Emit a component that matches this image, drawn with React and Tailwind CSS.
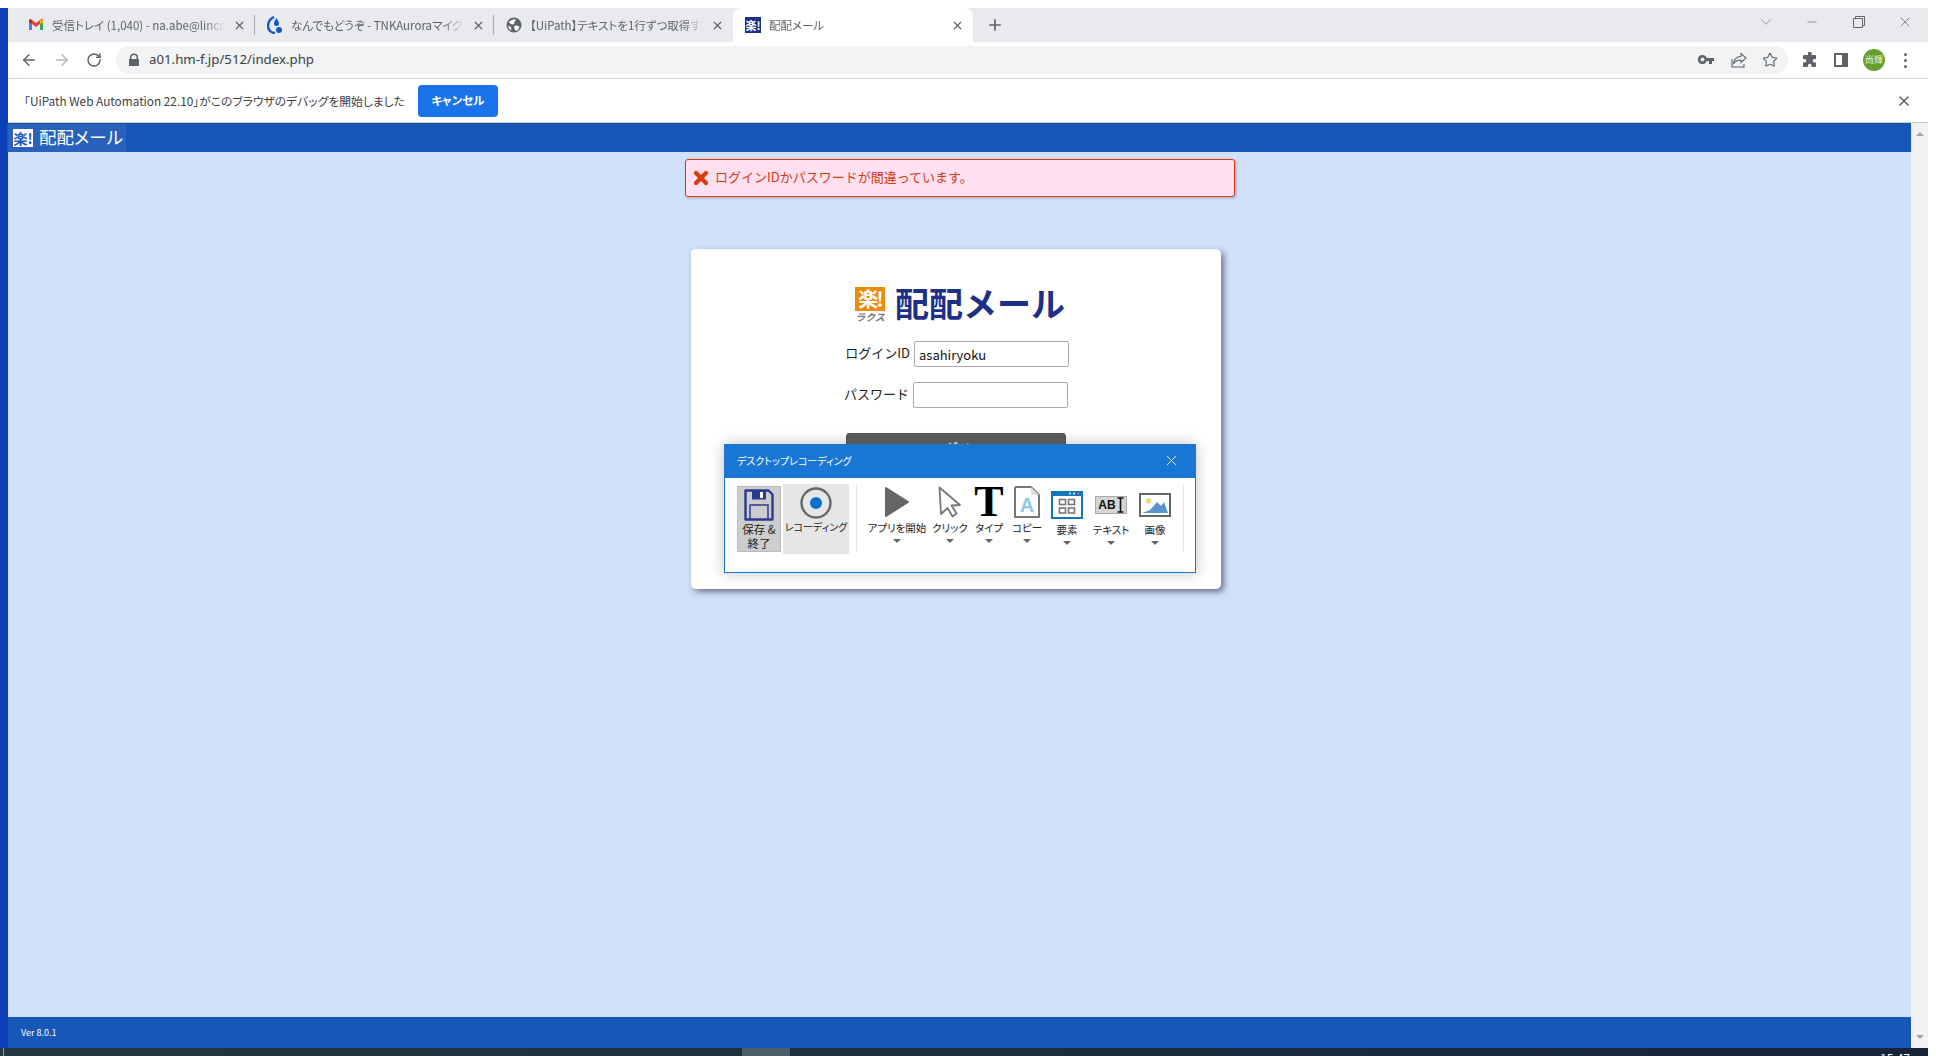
import { ArrowLeft, ArrowRight, RotateCw, X, Plus, ChevronDown, Minus, Star } from "lucide-react";

function GmailIcon() {
  return (
    <svg width="16" height="16" viewBox="0 0 16 16" className="shrink-0">
      <path d="M1 4v9h3V7z" fill="#4285f4" />
      <path d="M12 7v6h3V4z" fill="#34a853" />
      <path d="M1 4.500 4 7l4 3 4-3 3-2.500V3.500C15 2.300 13.700 1.700 12.800 2.400L8 6 3.200 2.400C2.300 1.700 1 2.300 1 3.500z" fill="#ea4335" />
      <path d="M12 2.900 15 3.500V5l-3 2z" fill="#fbbc04" />
      <path d="M1 3.500V5l3 2V2.900z" fill="#c5221f" />
    </svg>
  );
}

function AuroraIcon() {
  return (
    <svg width="16" height="18" viewBox="0 0 16 18" className="shrink-0">
      <path d="M7 1C3 3 1 6.500 1 10c0 4 3 7 7 7" fill="none" stroke="#1a56c4" strokeWidth="2.400" />
      <path d="M9.500 2C8 4.500 7 6 7 7.500a2.500 2.500 0 0 0 5 0C12 6 11 4.500 9.500 2z" fill="#1a56c4" />
      <circle cx="12" cy="14" r="3" fill="#1a56c4" />
    </svg>
  );
}

function GlobeIcon() {
  return (
    <svg width="16" height="16" viewBox="0 0 16 16" className="shrink-0">
      <circle cx="8" cy="8" r="7.500" fill="#5f6368" />
      <path d="M3 4.500 6 3l2.500-1L10 3.500 8 5l.500 2-2.500.500L3.500 6zM8 9l3-.500 2.500 1-1 3-2.500 1.500L8.500 12zM2 8.500 5 10l.500 3.500L3 11.500z" fill="#fff" />
    </svg>
  );
}

function RakuFavicon() {
  return (
    <span className="w-4 h-4 shrink-0 bg-[#1d2f86] text-white text-[11px] leading-4 font-bold text-center overflow-hidden">
      楽!
    </span>
  );
}

function Tab({ icon, title, active }) {
  return (
    <div
      className={
        active
          ? "w-[240px] h-[34px] bg-white rounded-t-lg flex items-center pl-3 pr-[9px] gap-2"
          : "w-[238px] h-[34px] flex items-center pl-3 pr-[8px] gap-2"
      }
    >
      {icon}
      <span className="flex-1 min-w-0 pt-px whitespace-nowrap overflow-hidden text-[11.500px] text-[#5f6368] [mask-image:linear-gradient(to_right,black_88%,transparent)]">
        {title}
      </span>
      <X size={13} strokeWidth={2.200} className="text-[#5f6368] shrink-0" />
    </div>
  );
}

function ToolItem({ width, label, low, children }) {
  return (
    <div className="flex flex-col items-center" style={{ width }}>
      <div className="h-[36px] w-full flex items-center justify-center">{children}</div>
      <div className={low ? "mt-[2px] text-[10.500px] leading-[16px] text-[#222] whitespace-nowrap" : "text-[10.500px] leading-[16px] text-[#222] whitespace-nowrap"}>
        {label}
      </div>
      <div className="mt-[3px] w-0 h-0 border-x-[4px] border-x-transparent border-t-[4px] border-t-[#666]" />
    </div>
  );
}

export default function App() {
  return (
    <div className="w-[1936px] h-[1056px] bg-white pt-2 flex flex-col overflow-hidden font-['Noto_Sans_CJK_JP','Noto_Sans',sans-serif] [font-feature-settings:'palt']">
      <div className="flex-1 min-h-0 flex">
        {/* left edge of the desktop */}
        <div className="w-2 bg-[#0a3fb8]" />

        {/* browser window */}
        <div className="w-[1920px] flex flex-col">
          {/* tab strip */}
          <div className="h-[34px] bg-[#e8eaed] flex pl-2 items-stretch">
            <Tab icon={<GmailIcon />} title="受信トレイ (1,040) - na.abe@lincrea.co.jp" />
            <div className="w-px h-[20px] self-center bg-[#a9acb0]" />
            <Tab icon={<AuroraIcon />} title="なんでもどうぞ - TNKAuroraマイグレーション" />
            <div className="w-px h-[20px] self-center bg-[#a9acb0]" />
            <Tab icon={<GlobeIcon />} title="【UiPath】テキストを1行ずつ取得する方法" />
            <div className="w-px" />
            <Tab active icon={<RakuFavicon />} title="配配メール" />
            <div className="ml-[13px] h-[34px] flex items-center">
              <Plus size={18} strokeWidth={2.200} className="text-[#5f6368]" />
            </div>
            <div className="flex-1 flex items-center justify-end h-[28px]">
              <ChevronDown size={18} strokeWidth={1} className="text-[#777]" />
              <Minus size={14} strokeWidth={1} className="text-[#555] ml-[30px]" />
              <svg width="12" height="12" viewBox="0 0 12 12" className="ml-[34px]" fill="none" stroke="#666">
                <path d="M.500 2.500h9v9h-9zM2.500 2.500v-2h9v9h-2" />
              </svg>
              <X size={16} strokeWidth={1} className="text-[#555] ml-[32px] mr-[15px]" />
            </div>
          </div>

          {/* address bar */}
          <div className="h-[37px] bg-white border-b border-[#d6d7d9] flex items-center">
            <ArrowLeft size={18} strokeWidth={2} className="text-[#5f6368] ml-3" />
            <ArrowRight size={18} strokeWidth={2} className="text-[#b5b7ba] ml-[15px]" />
            <RotateCw size={16} strokeWidth={2.200} className="text-[#5f6368] ml-[15px]" />
            <div className="ml-[14px] w-[1672px] h-[28px] rounded-full bg-[#f1f3f4] flex items-center pl-[12px] pr-[10px]">
              <svg width="12" height="14" viewBox="0 0 12 14" fill="#5f6368">
                <path d="M2 6V4.500a4 4 0 0 1 8 0V6h1v7H1V6zm1.500 0h5V4.500a2.500 2.500 0 0 0-5 0z" />
              </svg>
              <span className="ml-[9px] text-[13.250px] font-['Noto_Sans',sans-serif] text-[#3c4043]">a01.hm-f.jp/512/index.php</span>
              <div className="flex-1" />
              <svg width="16" height="10" viewBox="0 0 16 10" fill="#5f6368" className="mr-[17px]">
                <path d="M4.500 0a4.500 4.500 0 0 1 4.200 3H16v3h-2v3h-3V6H8.700A4.500 4.500 0 1 1 4.500 0zm0 2.500a2 2 0 1 0 0 4 2 2 0 0 0 0-4z" />
              </svg>
              <svg width="16" height="16" viewBox="0 0 16 16" fill="none" stroke="#5f6368" strokeWidth="1.100" className="mr-[15px]">
                <path d="M10 1.500 15 6l-5 4.500V8C6 8 4 9.500 2.500 12 3 8 5.500 4.700 10 4.300zM1 7v8h12v-3" />
              </svg>
              <Star size={16} strokeWidth={1.600} className="text-[#5f6368]" />
            </div>
            <svg width="16" height="16" viewBox="0 0 16 16" fill="#5f6368" className="ml-[14px]">
              <path d="M6 1.500a1.800 1.800 0 0 1 3.600 0V3H13a1 1 0 0 1 1 1v3h-1.500a1.800 1.800 0 0 0 0 3.600H14V14a1 1 0 0 1-1 1H9.500v-1.500a1.800 1.800 0 0 0-3.600 0V15H2a1 1 0 0 1-1-1v-3.500h1.500a1.800 1.800 0 0 0 0-3.600H1V4a1 1 0 0 1 1-1h4z" />
            </svg>
            <div className="ml-[16px] w-[14px] h-[14px] border-2 border-[#5f6368] bg-white border-r-[6px]" />
            <div className="ml-[15px] w-[22px] h-[22px] rounded-full bg-[#65a030] text-[#e8f3dc] text-[9px] leading-[22px] text-center">尚輝</div>
            <div className="ml-[19px] flex flex-col gap-[3px]">
              <span className="w-[3px] h-[3px] rounded-full bg-[#5f6368]" />
              <span className="w-[3px] h-[3px] rounded-full bg-[#5f6368]" />
              <span className="w-[3px] h-[3px] rounded-full bg-[#5f6368]" />
            </div>
          </div>

          {/* debugging info bar */}
          <div className="h-[44px] bg-white flex items-center pl-4 pr-[16px] border-b border-[#c9ccd2]">
            <span className="text-[11.800px] text-[#3c4043] whitespace-nowrap pt-px">「UiPath Web Automation 22.10」がこのブラウザのデバッグを開始しました</span>
            <button className="ml-[13px] w-[80px] h-[32px] rounded bg-[#1a73e8] text-white text-[11.500px] font-bold">キャンセル</button>
            <div className="flex-1" />
            <X size={16} strokeWidth={2.400} className="text-[#5f6368]" />
          </div>

          {/* page + scrollbar */}
          <div className="flex-1 min-h-0 flex">
            <div className="relative w-[1903px] flex flex-col">
              <div className="h-[29px] bg-[#1757b8] border-t border-[#1d4c9a] shadow-[0_1px_1px_#9fb0c8] flex">
                <div className="w-[118px] h-full bg-[#2a62bb] flex items-center pl-[5px] gap-[6px]">
                  <span className="shrink-0 w-[20px] h-[18px] bg-white text-[#1757b8] text-[14px] leading-[18px] font-bold text-center overflow-hidden">楽!</span>
                  <span className="text-white text-[17.500px] leading-none whitespace-nowrap mt-[-3px]">配配メール</span>
                </div>
              </div>

              <div className="flex-1 min-h-0 bg-[#d0e1f9] flex flex-col items-center pt-[7px]">
                {/* error message */}
                <div className="w-[550px] h-[38px] shrink-0 rounded-[3px] border border-[#d93a12] bg-[#ffe0f0] shadow-[1px_1px_3px_rgba(0,0,0,0.25)] flex items-center pl-[5px] gap-[4px] ml-[1px]">
                  <X size={20} strokeWidth={5} className="text-[#d93a12] shrink-0" />
                  <span className="text-[13px] text-[#d93a12] mt-[-2px] [font-feature-settings:normal]">ログインIDかパスワードが間違っています。</span>
                </div>

                {/* login card */}
                <div className="relative mt-[52px] mr-[7px] w-[530px] h-[340px] shrink-0 bg-white rounded-[5px] shadow-[3px_3px_6px_rgba(40,50,70,0.6)] flex flex-col items-center pt-[38px]">
                  <div className="flex items-start ml-[8px] [font-feature-settings:normal]">
                    <div className="flex flex-col items-center w-[30px]">
                      <span className="w-[30px] h-[24px] bg-[#ef8a05] text-white text-[20px] leading-[24px] font-bold text-center overflow-hidden tracking-[-2px]">楽!</span>
                      <span className="text-[#777] text-[10px] leading-[12px] font-bold italic whitespace-nowrap">ラクス</span>
                    </div>
                    <span className="ml-[10px] mt-[-2px] text-[#1d2f86] text-[34px] leading-[36px] font-bold whitespace-nowrap">配配メール</span>
                  </div>
                  <div className="mt-[18px] flex items-center gap-[4px] ml-[-3px]">
                    <span className="w-[70px] text-right text-[13px] text-[#222] mt-[-2px] [font-feature-settings:normal]">ログインID</span>
                    <input readOnly value="asahiryoku" className="w-[155px] h-[26px] px-1 border border-[#aaa] rounded-[2px] text-[13px] text-[#111] outline-none" />
                  </div>
                  <div className="mt-[15px] flex items-center gap-[4px] ml-[-5px]">
                    <span className="w-[70px] text-right text-[13px] text-[#222] mt-[-2px] [font-feature-settings:normal]">パスワード</span>
                    <input readOnly className="w-[155px] h-[26px] px-1 border border-[#aaa] rounded-[2px] outline-none" />
                  </div>
                  <button className="mt-[25px] w-[220px] h-[30px] rounded-[3px] bg-gradient-to-b from-[#5a5a5a] to-[#777] border border-[#555] text-white text-[14px] font-bold">ログイン</button>
                </div>
              </div>

              <div className="h-[31px] bg-[#1757b8] flex items-center pl-[13px] text-white text-[9px]">Ver 8.0.1</div>

              {/* recording dialog that floats over the login card */}
              <div className="absolute left-[716px] top-[321px] w-[472px] h-[129px] bg-white border border-[#1976d2] shadow-[0_0_14px_rgba(0,0,0,0.25)]">
                <div className="h-[33px] bg-[#1976d2] flex items-center pl-3 pr-[15px] text-white text-[10px]">
                  <span className="mt-[-2px]">デスクトップレコーディング</span>
                  <div className="flex-1" />
                  <X size={17} strokeWidth={1.200} className="mt-[-2px]" />
                </div>
                <div className="flex items-start pt-[6px] pl-[12px]">
                  <div className="mt-[2px] w-[44px] h-[66px] bg-[#cdcdcd] border border-[#bbb] flex flex-col items-center pt-[2px]">
                    <svg width="30" height="32" viewBox="0 0 30 32" fill="none">
                      <path d="M1.500 1.500h23l4 4v25h-27z" stroke="#2b3990" strokeWidth="2.400" strokeLinejoin="round" />
                      <path d="M8 1.500h14v9H8z" fill="#2b3990" />
                      <path d="M16 3h3v6h-3z" fill="#fff" />
                      <path d="M6 30V16h18v14" stroke="#2b3990" strokeWidth="1.500" />
                    </svg>
                    <div className="text-[11.500px] leading-[14px] text-[#222] text-center mt-[1px] whitespace-nowrap">保存 &<br />終了</div>
                  </div>
                  <div className="ml-[2px] w-[66px] h-[70px] bg-[#e6e6e6] flex flex-col items-center pt-[3px]">
                    <svg width="32" height="32" viewBox="0 0 32 32">
                      <circle cx="16" cy="16" r="14.500" fill="none" stroke="#666" strokeWidth="2.400" />
                      <circle cx="16" cy="16" r="6" fill="#0b72c9" />
                    </svg>
                    <div className="text-[10px] leading-[16px] text-[#222] whitespace-nowrap">レコーディング</div>
                  </div>
                  <div className="ml-[7px] w-px h-[67px] bg-[#e4e4e4]" />
                  <div className="ml-[9px] flex">
                    <ToolItem width={62} label="アプリを開始">
                      <svg width="24" height="32" viewBox="0 0 24 32">
                        <path d="M1 2 23 16 1 30z" fill="#666" stroke="#666" strokeWidth="2" strokeLinejoin="round" />
                      </svg>
                    </ToolItem>
                    <ToolItem width={44} label="クリック">
                      <svg width="24" height="32" viewBox="0 0 24 32">
                        <path d="M1.500 1.500 22 19l-8.500.500 5 8-4 3-5-8.500L3 28z" fill="#fff" stroke="#777" strokeWidth="1.800" strokeLinejoin="round" />
                      </svg>
                    </ToolItem>
                    <ToolItem width={34} label="タイプ">
                      <span className="font-['Liberation_Serif',serif] font-bold text-[44px] leading-[36px] text-black">T</span>
                    </ToolItem>
                    <ToolItem width={42} label="コピー">
                      <div className="relative w-[26px] h-[32px] flex items-center justify-center">
                        <svg width="26" height="32" viewBox="0 0 26 32" fill="none" className="absolute inset-0">
                          <path d="M2 1h15l8 8v22H1V2z" fill="#fff" stroke="#777" strokeWidth="2" strokeLinejoin="round" />
                          <path d="M17 1v8h8" fill="#ddd" />
                        </svg>
                        <span className="relative font-['Liberation_Sans',sans-serif] font-bold text-[20px] leading-none text-[#8ec7ea] mt-[6px]">A</span>
                      </div>
                    </ToolItem>
                    <ToolItem width={38} low label="要素">
                      <svg width="32" height="28" viewBox="0 0 32 28" className="mt-[6px]">
                        <rect width="32" height="28" fill="#0f78b8" />
                        <rect x="2" y="5" width="28" height="21" fill="#fff" />
                        <circle cx="19" cy="2.500" r="1" fill="#fff" />
                        <circle cx="23" cy="2.500" r="1" fill="#fff" />
                        <circle cx="27.500" cy="2.500" r="1" fill="#f0607a" />
                        <g fill="none" stroke="#777" strokeWidth="1.600">
                          <rect x="8.500" y="8.500" width="6" height="5" />
                          <rect x="17.500" y="8.500" width="6" height="5" />
                          <rect x="8.500" y="17" width="6" height="5" />
                          <rect x="17.500" y="17" width="6" height="5" />
                        </g>
                      </svg>
                    </ToolItem>
                    <ToolItem width={50} low label="テキスト">
                      <div className="mt-[6px] w-[32px] h-[18px] bg-[#d5d5d5] border border-[#aaa] flex items-center justify-center font-['Liberation_Sans',sans-serif] font-bold text-[12px] text-[#111]">
                        AB
                        <svg width="7" height="16" viewBox="0 0 7 16" fill="none" stroke="#111" strokeWidth="1.600" className="ml-px">
                          <path d="M.500 1h6M.500 15h6M3.500 1v14" />
                        </svg>
                      </div>
                    </ToolItem>
                    <ToolItem width={38} low label="画像">
                      <svg width="32" height="24" viewBox="0 0 32 24" className="mt-[6px]">
                        <rect x="1" y="1" width="30" height="22" fill="#fff" stroke="#666" strokeWidth="2" />
                        <circle cx="9.500" cy="8" r="2.700" fill="#f0d674" />
                        <path d="M3 20 11 17 18 9 22 13 25 9 29 20z" fill="#5b93d0" />
                      </svg>
                    </ToolItem>
                  </div>
                  <div className="ml-[9px] w-px h-[67px] bg-[#e4e4e4]" />
                </div>
              </div>
            </div>

            {/* scrollbar */}
            <div className="w-[17px] bg-[#f1f1f1] flex flex-col items-center justify-between py-[9px]">
              <div className="w-0 h-0 border-x-[4px] border-x-transparent border-b-[4px] border-b-[#a3a3a3]" />
              <div className="w-0 h-0 border-x-[4px] border-x-transparent border-t-[4px] border-t-[#a3a3a3]" />
            </div>
          </div>
        </div>
        <div className="w-2 bg-white" />
      </div>

      {/* sliver of the taskbar under the window */}
      <div className="h-2 shrink-0 flex">
        <div className="w-[1928px] h-2 bg-gradient-to-r from-[#24383f] to-[#17233a] relative overflow-hidden flex">
          <div className="ml-[3px] w-px h-2 bg-[#8a97a0]" />
          <div className="ml-[738px] w-[48px] h-2 bg-[#4a5f68]" />
          <span className="absolute left-[1880px] top-[4px] text-[12px] leading-none text-white">15:47</span>
        </div>
      </div>
    </div>
  );
}
